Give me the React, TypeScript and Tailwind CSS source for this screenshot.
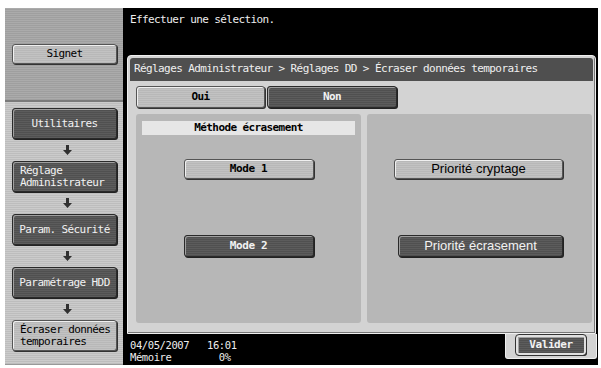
const mono = "font-['DejaVu_Sans_Mono','Liberation_Mono',monospace]"
const sans = "font-['Liberation_Sans',Arial,sans-serif]"

const darkBtn =
  'bg-[#575757] bg-[image:repeating-linear-gradient(180deg,#5c5c5c_0px,#5c5c5c_1px,#505050_1px,#505050_2px)] text-[#f2f2f2] border border-[#2a2a2a] rounded-[3px] shadow-[inset_1px_1px_0_#a0a0a0,1px_1px_0_#222]'
const lightBtn =
  'bg-[#bdbdbd] bg-[image:repeating-linear-gradient(180deg,#c2c2c2_0px,#c2c2c2_1px,#b8b8b8_1px,#b8b8b8_2px)] text-black border border-[#555] rounded-[3px] shadow-[inset_1px_1px_0_#f0f0f0,1px_1px_0_#333]'

function DownArrow() {
  return (
    <div className="h-[22px] flex items-center justify-center">
      <svg width="9" height="10" viewBox="0 0 9 10">
        <path d="M3 0h3v5h3l-4.5 5L0 5h3z" fill="#303030" />
      </svg>
    </div>
  )
}

function NavButton({ children, dark = true, left = false }: { children: React.ReactNode; dark?: boolean; left?: boolean }) {
  return (
    <div
      className={`h-[31px] w-[105px] flex items-center ${left ? 'justify-start pl-[7px]' : 'justify-center'} ${dark ? darkBtn : lightBtn} ${mono} text-[11px] leading-[12px] tracking-[-0.6px]`}
    >
      {children}
    </div>
  )
}

export default function App() {
  return (
    <div className="w-[601px] h-[368px] bg-white pt-[8px] pl-[5px] overflow-hidden">
      <div className="flex h-[357px]">
        {/* Left column */}
        <div className="w-[118px] flex flex-col">
          <div className="h-[94px] flex items-center pl-[7px] bg-[#a9a9a9] bg-[image:repeating-linear-gradient(180deg,#ababab_0px,#ababab_1px,#9f9f9f_1px,#9f9f9f_2px)] border-b-2 border-[#7a7a7a]">
            <div className={`h-[20px] w-[105px] flex items-center justify-center ${lightBtn} ${mono} text-[11px] tracking-[-0.6px]`}>
              Signet
            </div>
          </div>
          <div className="flex-1 pt-[6px] pl-[7px] bg-[#c8c8c8] bg-[image:repeating-linear-gradient(180deg,#cbcbcb_0px,#cbcbcb_1px,#bdbdbd_1px,#bdbdbd_2px)] border-b border-[#999]">
            <NavButton>Utilitaires</NavButton>
            <DownArrow />
            <NavButton left>
              <span>Réglage<br />Administrateur</span>
            </NavButton>
            <DownArrow />
            <NavButton>Param. Sécurité</NavButton>
            <DownArrow />
            <NavButton>Paramétrage HDD</NavButton>
            <DownArrow />
            <NavButton dark={false} left>
              <span>Écraser données<br />temporaires</span>
            </NavButton>
          </div>
        </div>

        {/* Right column */}
        <div className="w-[475px] bg-black flex flex-col">
          <div className={`h-[47px] pl-[7px] pt-[4px] text-[#eeeeee] ${mono} text-[11px] tracking-[-0.6px]`}>
            Effectuer une sélection.
          </div>

          <div className="ml-[4px] mr-[2px] h-[279px] bg-[#d3d3d3] border border-[#efefef] rounded-t-[4px] p-[2px] flex flex-col shadow-[inset_-1px_-1px_0_#777]">
            <div className={`h-[23px] bg-[#4f4f4f] rounded-t-[3px] flex items-center pl-[4px] text-[#efefef] ${mono} text-[11px] tracking-[-0.6px]`}>
              Réglages Administrateur &gt; Réglages DD &gt; Écraser données temporaires
            </div>
            <div className="flex mt-[5px] ml-[6px] gap-[2px]">
              <div className={`h-[22px] w-[129px] flex items-center justify-center ${lightBtn} ${mono} font-bold text-[11px] tracking-[-0.6px]`}>Oui</div>
              <div className={`h-[22px] w-[130px] flex items-center justify-center ${darkBtn} ${mono} font-bold text-[11px] tracking-[-0.6px]`}>Non</div>
            </div>
            <div className="flex mt-[6px] ml-[6px] gap-[6px]">
              <div className="w-[225px] h-[209px] bg-[#b7b7b7] rounded-[3px] pt-[7px] px-[6px] flex flex-col items-center">
                <div className={`w-full h-[14px] bg-[#e6e6e6] flex items-center justify-center ${mono} font-bold text-[11px] tracking-[-0.6px] text-black`}>
                  Méthode écrasement
                </div>
                <div className={`mt-[24px] h-[20px] w-[130px] flex items-center justify-center ${lightBtn} ${mono} font-bold text-[11px] tracking-[-0.4px]`}>Mode 1</div>
                <div className={`mt-[56px] h-[22px] w-[130px] flex items-center justify-center ${darkBtn} ${mono} font-bold text-[11px] tracking-[-0.4px]`}>Mode 2</div>
              </div>
              <div className="w-[225px] h-[209px] bg-[#b7b7b7] rounded-[3px] flex flex-col items-end pr-[29px]">
                <div className={`mt-[45px] h-[20px] w-[169px] flex items-center justify-center ${lightBtn} ${sans} text-[13px]`}>Priorité cryptage</div>
                <div className={`mt-[56px] h-[22px] w-[165px] flex items-center justify-center ${darkBtn} ${sans} text-[13px]`}>Priorité écrasement</div>
              </div>
            </div>
          </div>

          <div className="flex flex-1">
            <div className={`flex-1 pl-[7px] pt-[5px] text-[#eeeeee] ${mono} text-[10.5px] leading-[12px] tracking-[-0.4px] whitespace-pre`}>
              <div>04/05/2007   16:01</div>
              <div>Mémoire        0%</div>
            </div>
            <div className="w-[92px] h-[25px] mr-[1px] bg-[#d3d3d3] border-x border-b border-[#efefef] rounded-b-[3px] flex justify-center pt-[1px]">
              <div className={`h-[20px] w-[70px] flex items-center justify-center ${darkBtn} border-2 border-[#e0e0e0] outline outline-1 outline-[#333] ${mono} font-bold text-[11px] tracking-[-0.4px]`}>
                Valider
              </div>
            </div>
          </div>
        </div>
      </div>
    </div>
  )
}
